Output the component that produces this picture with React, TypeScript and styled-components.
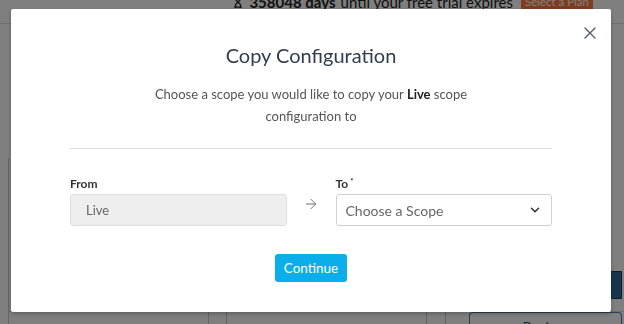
import React from "react";
import styled, { createGlobalStyle } from "styled-components";
import { ArrowRight, ChevronDown, X, Hourglass } from "lucide-react";

const GlobalStyle = createGlobalStyle`
  html, body {
    margin: 0;
    padding: 0;
    height: 100%;
  }
  body {
    font-family: Lato, "Open Sans", sans-serif;
    background: #fff;
    overflow: hidden;
  }
  #root {
    height: 100%;
  }
`;

/* page behind the modal */

const Page = styled.div`
  height: 100%;
  display: flex;
  flex-direction: column;
  background: #fff;
`;

const TrialBar = styled.div`
  height: 9px;
  display: flex;
  align-items: flex-end;
  justify-content: flex-end;
  gap: 8px;
  padding-right: 31px;
  overflow: hidden;
  font-size: 15px;
  color: #222;
  line-height: 18px;
`;

const TrialText = styled.span`
  display: flex;
  align-items: center;
  gap: 5px;
  margin-bottom: -2px;
  b {
    font-weight: 700;
  }
`;

const PlanButton = styled.span`
  background: #ff7a3f;
  color: #fff;
  font-size: 11.5px;
  padding: 0 4px;
  margin-bottom: -2px;
`;

const NavLine = styled.div`
  height: 14px;
  border-bottom: 1px solid #ddd;
`;

const Body = styled.div`
  flex: 1;
  display: grid;
  grid-template-columns: 9px 1fr;
`;

const SideRail = styled.div`
  border-right: 1px solid #ccc;
  margin-top: 134px;
`;

const Content = styled.div`
  display: flex;
  flex-direction: column;
  justify-content: flex-end;
`;

const RightTools = styled.div`
  display: flex;
  justify-content: flex-end;
  padding-right: 2px;
  margin-bottom: 12px;
`;

const DarkButton = styled.div`
  width: 12px;
  height: 26px;
  background: #2f6e9c;
  border: 1px solid #1c3a52;
  border-radius: 4px 0 0 4px;
`;

const Columns = styled.div`
  height: 12px;
  display: grid;
  grid-template-columns: 200px 18px 200px 19px 23px 1fr;
  border-top: 1px solid #ddd;
`;

const Column = styled.div<{ $line?: boolean }>`
  border-right: ${(p) => (p.$line ? "1px solid #ccc" : "none")};
`;

const BackupTab = styled.div`
  border: 1px solid #4a7fa8;
  border-bottom: none;
  border-radius: 4px 4px 0 0;
  margin-right: 2px;
  text-align: center;
  color: #2a5c86;
  font-size: 14px;
  line-height: 20px;
  padding-top: 4px;
`;

/* modal */

const Overlay = styled.div`
  position: fixed;
  inset: 0;
  background: rgba(0, 0, 0, 0.5);
  display: flex;
  justify-content: center;
  align-items: flex-start;
  padding-top: 9px;
  padding-right: 2px;
`;

const Modal = styled.div`
  position: relative;
  width: 600px;
  background: #fff;
  border-radius: 2px;
  box-shadow: 0 2px 4px rgba(0, 0, 0, 0.25);
  padding: 32px 59px 30px;
  box-sizing: border-box;
  display: flex;
  flex-direction: column;
  align-items: center;
`;

const CloseButton = styled.button`
  position: absolute;
  top: 14px;
  right: 11px;
  background: none;
  border: none;
  padding: 0;
  color: #55606c;
  display: flex;
  cursor: pointer;
`;

const Title = styled.h2`
  margin: 0;
  font-size: 20px;
  line-height: 28px;
  font-weight: 400;
  color: #2e3d4f;
`;

const Intro = styled.p`
  margin: 14px 0 0;
  width: 320px;
  text-align: center;
  font-size: 13px;
  line-height: 22px;
  color: #555;
  b {
    color: #222;
    font-weight: 700;
  }
`;

const Divider = styled.hr`
  width: 100%;
  margin: 21px 0 0;
  border: none;
  border-top: 1px solid #ddd;
`;

const FieldRow = styled.div`
  width: 100%;
  margin-top: 24px;
  display: grid;
  grid-template-columns: 1fr 49px 1fr;
  align-items: end;
`;

const Field = styled.div`
  display: flex;
  flex-direction: column;
  gap: 2px;
`;

const Label = styled.label`
  font-size: 12px;
  line-height: 16px;
  font-weight: 700;
  color: #333;
  sup {
    font-size: 8px;
    margin-left: 2px;
    vertical-align: 4px;
  }
`;

const Box = styled.div<{ $disabled?: boolean }>`
  height: 32px;
  box-sizing: border-box;
  display: flex;
  align-items: center;
  justify-content: space-between;
  padding: 0 ${(p) => (p.$disabled ? "15px" : "9px")};
  border: 1px solid ${(p) => (p.$disabled ? "#dedede" : "#cfcfcf")};
  border-radius: 3px;
  background: ${(p) => (p.$disabled ? "#eeeeee" : "#fff")};
  color: #666;
  font-size: ${(p) => (p.$disabled ? "13px" : "14px")};
`;

const ArrowCell = styled.div`
  height: 32px;
  display: flex;
  justify-content: center;
  align-items: center;
  padding-bottom: 12px;
  box-sizing: border-box;
  color: #666;
`;

const ContinueButton = styled.button`
  margin-top: 28px;
  height: 28px;
  padding: 0 9px;
  border: none;
  border-radius: 3px;
  background: #0caeea;
  color: #fff;
  font-family: Lato, sans-serif;
  font-size: 13.5px;
  cursor: pointer;
`;

const App = (): JSX.Element => {
  return (
    <>
      <GlobalStyle />
      <Page>
        <TrialBar>
          <TrialText>
            <Hourglass size={12} strokeWidth={2.5} />
            <b>358048 days</b> until your free trial expires
          </TrialText>
          <PlanButton>Select a Plan</PlanButton>
        </TrialBar>
        <NavLine />
        <Body>
          <SideRail />
          <Content>
            <RightTools>
              <DarkButton />
            </RightTools>
            <Columns>
              <Column $line />
              <Column $line />
              <Column $line />
              <Column $line />
              <Column />
              <BackupTab>Backup</BackupTab>
            </Columns>
          </Content>
        </Body>
      </Page>
      <Overlay>
        <Modal>
          <CloseButton aria-label="Close">
            <X size={20} strokeWidth={1.6} />
          </CloseButton>
          <Title>Copy Configuration</Title>
          <Intro>
            Choose a scope you would like to copy your <b>Live</b> scope
            configuration to
          </Intro>
          <Divider />
          <FieldRow>
            <Field>
              <Label>From</Label>
              <Box $disabled>Live</Box>
            </Field>
            <ArrowCell>
              <ArrowRight size={16} strokeWidth={1.4} />
            </ArrowCell>
            <Field>
              <Label>
                To<sup>*</sup>
              </Label>
              <Box>
                <span>Choose a Scope</span>
                <ChevronDown size={14} strokeWidth={2.6} color="#333" />
              </Box>
            </Field>
          </FieldRow>
          <ContinueButton>Continue</ContinueButton>
        </Modal>
      </Overlay>
    </>
  );
};

export default App;
